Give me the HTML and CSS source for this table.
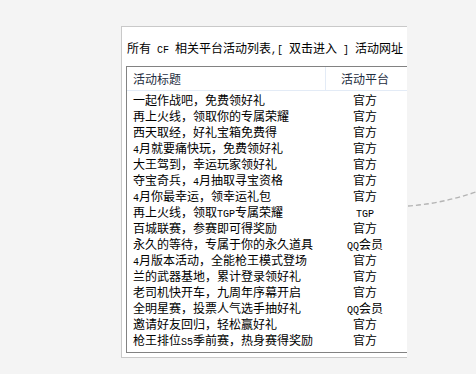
FILE: index.html
```html
<!DOCTYPE html>
<html lang="zh-CN">
<head>
<meta charset="utf-8">
<link rel="stylesheet" href="styles.css">
</head>
<body>
<div class="canvas">
  <div class="panel">
    <div class="caption">所有<span class="a"> CF </span>相关平台活动列表<span class="a">,[ </span>双击进入<span class="a"> ] </span>活动网址</div>
    <div class="listview">
      <div class="header">
        <div class="hcol title-col">活动标题</div>
        <div class="hcol plat-col">活动平台</div>
      </div>
      <div class="rows">
        <div class="row"><span class="c1">一起作战吧，免费领好礼</span><span class="c2">官方</span></div>
        <div class="row"><span class="c1">再上火线，领取你的专属荣耀</span><span class="c2">官方</span></div>
        <div class="row"><span class="c1">西天取经，好礼宝箱免费得</span><span class="c2">官方</span></div>
        <div class="row"><span class="c1"><span class="a">4</span>月就要痛快玩，免费领好礼</span><span class="c2">官方</span></div>
        <div class="row"><span class="c1">大王驾到，幸运玩家领好礼</span><span class="c2">官方</span></div>
        <div class="row"><span class="c1">夺宝奇兵，<span class="a">4</span>月抽取寻宝资格</span><span class="c2">官方</span></div>
        <div class="row"><span class="c1"><span class="a">4</span>月你最幸运，领幸运礼包</span><span class="c2">官方</span></div>
        <div class="row"><span class="c1">再上火线，领取<span class="a">TGP</span>专属荣耀</span><span class="c2"><span class="a">TGP</span></span></div>
        <div class="row"><span class="c1">百城联赛，参赛即可得奖励</span><span class="c2">官方</span></div>
        <div class="row"><span class="c1">永久的等待，专属于你的永久道具</span><span class="c2"><span class="a">QQ</span>会员</span></div>
        <div class="row"><span class="c1"><span class="a">4</span>月版本活动，全能枪王模式登场</span><span class="c2">官方</span></div>
        <div class="row"><span class="c1">兰的武器基地，累计登录领好礼</span><span class="c2">官方</span></div>
        <div class="row"><span class="c1">老司机快开车，九周年序幕开启</span><span class="c2">官方</span></div>
        <div class="row"><span class="c1">全明星赛，投票人气选手抽好礼</span><span class="c2"><span class="a">QQ</span>会员</span></div>
        <div class="row"><span class="c1">邀请好友回归，轻松赢好礼</span><span class="c2">官方</span></div>
        <div class="row"><span class="c1">枪王排位<span class="a">S5</span>季前赛，热身赛得奖励</span><span class="c2">官方</span></div>
      </div>
    </div>
  </div>
  <svg class="connector" width="76" height="40" viewBox="0 0 76 40">
    <path d="M8 26 Q40 24 76 12" fill="none" stroke="#b4b4b4" stroke-width="1.4" stroke-dasharray="5 3"/>
  </svg>
</div>
</body>
</html>
```

FILE: styles.css
```css
html, body {
  margin: 0;
  padding: 0;
  background: #f4f4f4;
}
body {
  width: 476px;
  height: 374px;
  overflow: hidden;
  font-family: "Noto Sans CJK SC", "Noto Sans", sans-serif;
  font-size: 12px;
  color: #000;
}
.canvas {
  position: relative;
  width: 476px;
  height: 374px;
  padding-top: 26px;
  box-sizing: border-box;
}
.panel {
  margin-left: 121px;
  width: 286px;
  height: 332px;
  box-sizing: border-box;
  background: #fff;
  border: 1px solid #c9c9c9;
  border-right: none;
  overflow: hidden;
  padding: 13px 0 4px 4px;
}
.a {
  font-family: "Liberation Mono", "DejaVu Sans Mono", monospace;
  font-size: 10px;
  white-space: pre;
}
.caption {
  line-height: 16px;
  height: 16px;
  padding-left: 1px;
  white-space: nowrap;
  margin-bottom: 10px;
}
.listview {
  width: 300px;
  border: 1px solid #828282;
  box-sizing: border-box;
  height: 287px;
  background: #fff;
}
.header {
  display: flex;
  height: 23px;
  border-bottom: 1px solid #e3ebf6;
  color: #1e2d40;
}
.hcol {
  line-height: 23px;
  white-space: nowrap;
}
.title-col {
  width: 192px;
  padding-left: 6px;
  border-right: 1px solid #e3ebf6;
}
.plat-col {
  width: 78px;
  text-align: center;
}
.rows {
  padding-top: 1px;
}
.row {
  display: flex;
  height: 16px;
  line-height: 16px;
  white-space: nowrap;
}
.c1 {
  width: 193px;
  padding-left: 6px;
}
.c2 {
  width: 78px;
  text-align: center;
}
.connector {
  position: absolute;
  left: 400px;
  top: 180px;
}
```
